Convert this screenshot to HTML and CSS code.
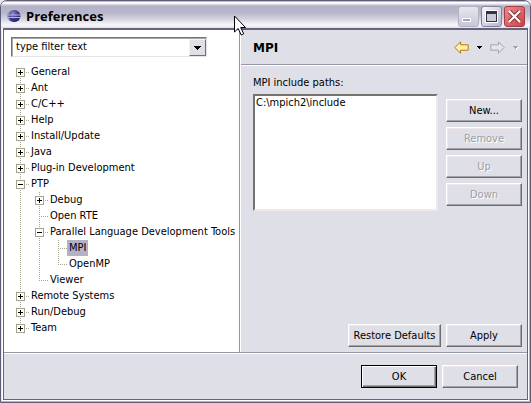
FILE: index.html
```html
<!DOCTYPE html>
<html lang="en">
<head>
<meta charset="utf-8">
<title>Preferences</title>
<link rel="stylesheet" href="styles.css">
</head>
<body>
<div class="window">
  <header class="titlebar">
    <svg class="app-icon" width="14" height="14" viewBox="0 0 14 14" aria-hidden="true">
      <defs>
        <radialGradient id="orb" cx="0.35" cy="0.3" r="0.8">
          <stop offset="0" stop-color="#8f8cc8"/>
          <stop offset="0.5" stop-color="#453f90"/>
          <stop offset="1" stop-color="#1d1758"/>
        </radialGradient>
      </defs>
      <circle cx="6" cy="7" r="6" fill="#9a97c8"/>
      <circle cx="7.500" cy="7" r="6" fill="url(#orb)"/>
      <path d="M1 6h13M1 8.500h13" stroke="#b4b5e0" stroke-width="1"/>
    </svg>
    <h1 class="title">Preferences</h1>
    <div class="window-buttons">
      <button class="win-btn minimize" aria-label="Minimize"><svg width="19" height="19" viewBox="0 0 19 19" shape-rendering="crispEdges"><path d="M3 11h9v4H3z" fill="#fff"/><path d="M4 12h7v2H4z" fill="#a3a1bd"/></svg></button>
      <button class="win-btn maximize" aria-label="Maximize"><svg width="19" height="19" viewBox="0 0 19 19" shape-rendering="crispEdges"><path d="M3 3h13v13H3z" fill="#fff"/><path d="M4 4h11v11H4z" fill="#343249"/><path d="M5 7h9v7H5z" fill="#c9c9d8"/></svg></button>
      <button class="win-btn close" aria-label="Close"><svg width="19" height="19" viewBox="0 0 19 19"><path d="M4.500 4.500l10 10M14.500 4.500l-10 10" stroke="#7c3038" stroke-width="4"/><path d="M4 4l11 11M15 4L4 15" stroke="#fff" stroke-width="2.200"/></svg></button>
    </div>
    <svg class="pointer" width="12" height="21" viewBox="0 0 12 21" aria-hidden="true"><path d="M.5 1v16l3.700-3.500 3 6.500 2.500-1.200-3-6.300h4.800z" fill="#fff" stroke="#000"/></svg>
  </header>

  <main class="content">
    <div class="panes">
      <nav class="sidebar" aria-label="Preference pages">
        <div class="combo">
          <input class="combo-text" type="text" value="type filter text" aria-label="Filter">
          <button class="combo-arrow" aria-label="Show filters"><svg width="7" height="4" viewBox="0 0 7 4" shape-rendering="crispEdges"><path d="M0 0h7v1H6v1H5v1H4v1H3V3H2V2H1V1H0z"/></svg></button>
        </div>
        <ul class="tree">
          <li><div class="row"><button class="toggle plus" aria-label="Expand"></button><span class="label">General</span></div></li>
          <li><div class="row"><button class="toggle plus" aria-label="Expand"></button><span class="label">Ant</span></div></li>
          <li><div class="row"><button class="toggle plus" aria-label="Expand"></button><span class="label">C/C++</span></div></li>
          <li><div class="row"><button class="toggle plus" aria-label="Expand"></button><span class="label">Help</span></div></li>
          <li><div class="row"><button class="toggle plus" aria-label="Expand"></button><span class="label">Install/Update</span></div></li>
          <li><div class="row"><button class="toggle plus" aria-label="Expand"></button><span class="label">Java</span></div></li>
          <li><div class="row"><button class="toggle plus" aria-label="Expand"></button><span class="label">Plug-in Development</span></div></li>
          <li><div class="row"><button class="toggle" aria-label="Collapse"></button><span class="label">PTP</span></div>
            <ul>
              <li><div class="row"><button class="toggle plus" aria-label="Expand"></button><span class="label">Debug</span></div></li>
              <li><div class="row leaf"><span class="label">Open RTE</span></div></li>
              <li><div class="row"><button class="toggle" aria-label="Collapse"></button><span class="label">Parallel Language Development Tools</span></div>
                <ul>
                  <li><div class="row leaf"><span class="label selected">MPI</span></div></li>
                  <li><div class="row leaf"><span class="label">OpenMP</span></div></li>
                </ul>
              </li>
              <li><div class="row leaf"><span class="label">Viewer</span></div></li>
            </ul>
          </li>
          <li><div class="row"><button class="toggle plus" aria-label="Expand"></button><span class="label">Remote Systems</span></div></li>
          <li><div class="row"><button class="toggle plus" aria-label="Expand"></button><span class="label">Run/Debug</span></div></li>
          <li><div class="row"><button class="toggle plus" aria-label="Expand"></button><span class="label">Team</span></div></li>
        </ul>
      </nav>

      <section class="page">
        <div class="page-header">
          <h2 class="page-title">MPI</h2>
          <div class="history">
            <button class="nav-btn" aria-label="Back"><svg width="15" height="13" viewBox="0 0 15 13"><path d="M.8 6.500L6.500.8v3h7.700v5.400H6.500v3z" fill="#fff0a8" stroke="#b87a10"/></svg></button>
            <button class="nav-btn" aria-label="Back history"><svg width="5" height="3" viewBox="0 0 5 3" shape-rendering="crispEdges"><path d="M0 0h5v1H4v1H3v1H2V2H1V1H0z"/></svg></button>
            <button class="nav-btn" aria-label="Forward" disabled><svg width="15" height="13" viewBox="0 0 15 13"><path d="M14.200 6.500L8.500.8v3H.8v5.400h7.700v3z" fill="#e4e4eb" stroke="#a5a5af"/></svg></button>
            <button class="nav-btn" aria-label="Forward history" disabled><svg width="6" height="4" viewBox="0 0 6 4" shape-rendering="crispEdges"><path d="M1 1h5v1H5v1H4v1H3z" fill="#fff"/><path d="M0 0h5v1H4v1H3v1H2V2H1V1H0z" fill="#a3a3ad"/></svg></button>
          </div>
        </div>
        <div class="page-body">
          <label class="list-label" for="paths">MPI include paths:</label>
          <div class="paths">
            <select class="path-list" id="paths" size="7"><option>C:\mpich2\include</option></select>
            <div class="path-actions">
              <button class="btn">New...</button>
              <button class="btn" disabled>Remove</button>
              <button class="btn" disabled>Up</button>
              <button class="btn" disabled>Down</button>
            </div>
          </div>
          <div class="page-actions">
            <button class="btn wide">Restore Defaults</button>
            <button class="btn">Apply</button>
          </div>
        </div>
      </section>
    </div>
    <footer class="dialog-actions">
      <button class="btn default">OK</button>
      <button class="btn">Cancel</button>
    </footer>
  </main>
</div>
</body>
</html>
```
FILE: styles.css
```css
* { box-sizing: border-box; }

body {
  margin: 0;
  background: #e6e6ec;
  color: #000;
  font: 11px/16px "DejaVu Sans Condensed", "DejaVu Sans", sans-serif;
}

button, input, select { font: inherit; color: inherit; margin: 0; }
button { padding: 0; }
svg { display: block; }
ul { list-style: none; margin: 0; padding: 0; }

.window {
  display: flex;
  flex-direction: column;
  min-height: 100vh;
  padding: 0 2px 2px;
  border: 1px solid #5f5b78;
  border-radius: 7px 7px 0 0;
  background: #fff;
  box-shadow: inset -1px -1px #b5b3c9, inset 1px 0 #e8e8f0;
}

/* Title bar */
.titlebar {
  position: relative;
  display: flex;
  align-items: center;
  height: 27px;
  margin: 0 -2px;
  padding: 3px 5px 0 6px;
  border-radius: 6px 6px 0 0;
  background: linear-gradient(#77738f 0, #fff 1px, #fff 2px, #b1b0c6 5px, #b9b8cb 12px, #d3d3df 18px, #f8f8fa 24px, #e0e0e9 27px);
}
.title {
  flex: 1;
  margin: 0 0 0 5px;
  font: bold 13px/20px "Open Sans", "Noto Sans", sans-serif;
}
.window-buttons { display: flex; gap: 2px; }
.win-btn {
  width: 21px;
  height: 21px;
  border: 1px solid #8582a0;
  border-radius: 3px;
  background: linear-gradient(135deg, #f8f8fb, #b4b3ca);
}
.minimize { border-color: #b4b3c5; background: linear-gradient(#e6e6ee, #c8c8d8); }
.close { border-color: #a63c44; background: linear-gradient(135deg, #e98b8c, #c9434b); }
.pointer { position: absolute; left: 233px; top: 14px; }

/* Dialog surface */
.content {
  flex: 1;
  display: flex;
  flex-direction: column;
  border: 1px solid #66627f;
  border-top-width: 2px;
  background: #dedfe7;
}
.panes {
  flex: 1;
  display: flex;
  border-bottom: 1px solid #9695a3;
}

/* Page tree */
.sidebar {
  flex: 0 0 236px;
  min-width: 0;
  padding: 7px 0 0 7px;
  border-right: 1px solid #9695a3;
  background: #fff;
}
.combo {
  display: flex;
  width: 196px;
  height: 20px;
  border: 1px solid;
  border-color: #77736f #e9e2e2 #e9e2e2 #77736f;
  box-shadow: inset 1px 1px #aaa6a4;
}
.combo-text {
  flex: 1;
  min-width: 0;
  padding: 0 0 0 4px;
  border: 0;
  background: none;
  outline: 0;
}
.combo-arrow {
  display: grid;
  place-items: center;
  width: 17px;
  margin: 1px 0 0;
  border: 1px solid;
  border-color: #f4f4f8 #716f7c #716f7c #f4f4f8;
  background: #dedfe7;
}
.tree { padding: 7px 0 0 5px; }
.tree li {
  background: repeating-linear-gradient(#a9a993 0 1px, transparent 1px 2px) 4px 0 / 1px 100% no-repeat;
}
.tree li:last-child { background-size: 1px 9px; }
.tree > li:first-child { background-position: 4px 8px; }
.tree ul { padding-left: 19px; }
.row {
  display: flex;
  align-items: center;
  height: 16px;
  background: repeating-linear-gradient(90deg, #a9a993 0 1px, transparent 1px 2px) 4px 8px / 9px 1px no-repeat;
}
.row.leaf { padding-left: 9px; }
.toggle {
  width: 9px;
  height: 9px;
  border: 1px solid #a3a38c;
  background: linear-gradient(#000, #000) center / 5px 1px no-repeat #fff;
}
.toggle.plus {
  background:
    linear-gradient(#000, #000) center / 5px 1px no-repeat,
    linear-gradient(#000, #000) center / 1px 5px no-repeat #fff;
}
.label { margin-left: 4px; padding: 0 2px; white-space: nowrap; }
.selected { background: #b4b1c7; }

/* Page */
.page {
  flex: 1;
  min-width: 0;
  display: flex;
  flex-direction: column;
  border-left: 1px solid #fff;
}
.page-header {
  display: flex;
  align-items: center;
  justify-content: space-between;
  height: 35px;
  padding: 1px 8px 0 12px;
  border-bottom: 1px solid #9695a3;
  box-shadow: 0 1px #fff;
}
.page-title { margin: 0; font: bold 12px/16px "DejaVu Sans", sans-serif; }
.history { display: flex; align-items: center; gap: 8px; }
.nav-btn { border: 0; background: none; }
.page-body {
  flex: 1;
  display: flex;
  flex-direction: column;
  padding: 10px 5px 5px 12px;
}
.list-label { margin-bottom: 3px; }
.paths { display: flex; gap: 8px; }
.path-list {
  flex: 1;
  min-width: 0;
  height: 117px;
  padding: 0;
  border: 2px solid;
  border-color: #77736f #efe8e8 #efe8e8 #77736f;
  border-radius: 0;
  background: #fff;
  outline: 0;
  overflow: hidden;
}
.path-list option { padding: 0 1px; min-height: 0; line-height: 16px; }
.path-actions { display: grid; gap: 5px; align-content: start; padding-top: 5px; }
.page-actions {
  display: flex;
  justify-content: flex-end;
  gap: 5px;
  margin-top: auto;
}

.btn {
  width: 76px;
  height: 23px;
  border: 1px solid;
  border-color: #fff #6f6b6b #6f6b6b #fff;
  background: #dedfe7;
  box-shadow: inset -1px -1px #a5a2a8, inset 1px 1px #f0e8e8;
}
.btn.wide { width: 93px; white-space: nowrap; }
.btn:disabled { color: #9e9da8; text-shadow: 1px 1px #fff; }
.btn.default {
  border-color: #000;
  box-shadow: inset 1px 1px #fff, inset -1px -1px #6f6b6b, inset -2px -2px #a5a2a8;
}

.dialog-actions {
  display: flex;
  justify-content: flex-end;
  gap: 5px;
  padding: 11px 9px 11px;
  border-top: 1px solid #fff;
}
```
